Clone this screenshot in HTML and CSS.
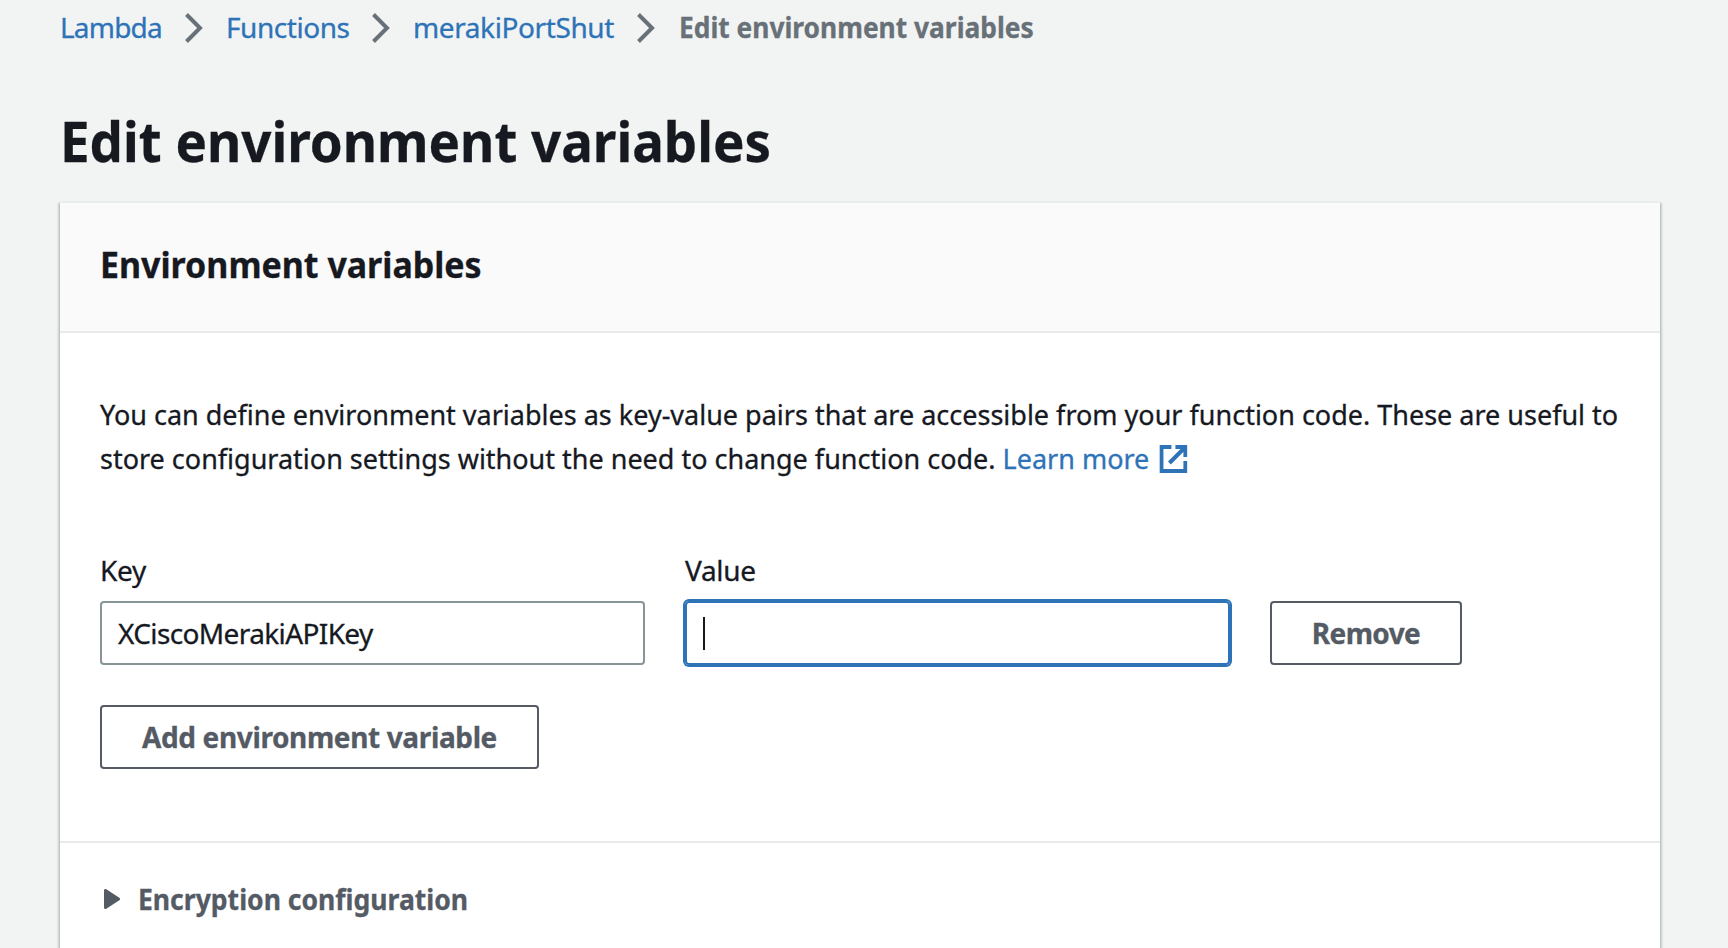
FILE: index.html
```html
<!DOCTYPE html>
<html lang="en">
<head>
<meta charset="utf-8">
<title>Edit environment variables</title>
<link rel="stylesheet" href="styles.css">
</head>
<body>
<nav class="breadcrumbs">
  <a class="crumb lambda">Lambda</a>
  <svg class="chevron" viewBox="0 0 18 30"><path d="M1.5 1.5 15 15 1.5 28.5"/></svg>
  <a class="crumb functions">Functions</a>
  <svg class="chevron" viewBox="0 0 18 30"><path d="M1.5 1.5 15 15 1.5 28.5"/></svg>
  <a class="crumb function-name">merakiPortShut</a>
  <svg class="chevron" viewBox="0 0 18 30"><path d="M1.5 1.5 15 15 1.5 28.5"/></svg>
  <span class="crumb current">Edit environment variables</span>
</nav>
<h1 class="title"><span>Edit environment variables</span></h1>
<main class="card">
  <header class="card-header"><h2>Environment variables</h2></header>
  <section class="card-body">
    <p class="intro">You can define environment variables as key-value pairs that are accessible from your function code. These are useful to<br>store configuration settings without the need to change function code. <a class="learn">Learn more</a><svg class="external" viewBox="0 0 28 28" preserveAspectRatio="none"><path d="M12 2H2v24h24V16M16 2h10v10M25 3 10 18"/></svg></p>
    <div class="variable-row">
      <div class="field">
        <label class="label">Key</label>
        <div class="input"><span>XCiscoMerakiAPIKey</span></div>
      </div>
      <div class="field">
        <label class="label">Value</label>
        <div class="input focused"><i class="caret"></i></div>
      </div>
      <button class="button remove">Remove</button>
    </div>
    <button class="button add">Add environment variable</button>
  </section>
  <section class="expander">
    <svg class="triangle" viewBox="0 0 16 20"><path d="M1.5 1.5v17L14.5 10z"/></svg>
    <span>Encryption configuration</span>
  </section>
</main>
</body>
</html>
```
FILE: styles.css
```css
* { box-sizing: border-box; }
body {
  margin: 0;
  height: 948px;
  overflow: hidden;
  background: #f2f4f3;
  color: #16191f;
  font: 28px/44px "Noto Sans", "Open Sans", sans-serif;
  -webkit-text-stroke: .3px currentColor;
}
h1, h2, p { margin: 0; }
.breadcrumbs { display: flex; align-items: center; height: 56px; padding-left: 60px; white-space: nowrap; }
.crumb { padding-bottom: 2px; color: #2e73b8; }
.lambda { width: 125px; letter-spacing: -.8px; }
.functions { width: 145px; letter-spacing: -.45px; }
.function-name { width: 223px; letter-spacing: -.4px; }
.crumb.current { color: #687078; font-weight: 700; transform: scaleX(.941); transform-origin: left; }
.chevron { flex: none; width: 18px; height: 30px; margin-right: 24px; fill: none; stroke: #687078; stroke-width: 4; }
.functions, .function-name { margin-left: -1px; margin-right: 1px; }
.title { height: 145px; padding: 48px 0 0 60px; font-size: 56px; line-height: 72px; white-space: nowrap; }
.title span { display: inline-block; transform: scaleX(.943); transform-origin: left; }
.card {
  width: 1600px;
  height: 760px;
  margin-left: 60px;
  border-top: 2px solid #eaeded;
  background: #fff;
  box-shadow: 0 2px 2px rgba(0,28,36,.3), 2px 2px 2px rgba(0,28,36,.15), -2px 2px 2px rgba(0,28,36,.15);
}
.card-header { height: 130px; padding: 40px 40px 0; border-bottom: 2px solid #eaeaea; background: #fafafa; }
.card-header h2 { font-size: 36px; line-height: 44px; transform: scaleX(.943); transform-origin: left; }
.card-body { height: 508px; padding: 59px 40px 0; }
.intro { height: 156px; white-space: nowrap; transform: scaleX(.964); transform-origin: left; }
.learn { color: #2e73b8; }
.external { width: 29px; height: 28px; margin-left: 10px; vertical-align: -4px; fill: none; stroke: #2e73b8; stroke-width: 4; }
.variable-row { display: flex; align-items: flex-end; gap: 40px; height: 117px; }
.field { width: 545px; }
.label { display: block; height: 53px; letter-spacing: -.3px; }
.input { display: flex; align-items: center; height: 64px; padding: 0 16px; border: 2px solid #879596; border-radius: 4px; letter-spacing: -.62px; }
.input.focused { border-color: #2e73b8; box-shadow: 0 0 0 2px #2e73b8; }
.caret { width: 2px; height: 33px; background: #16191f; }
.button { display: block; height: 64px; padding: 0; border: 2px solid #545b64; border-radius: 4px; background: #fff; color: #545b64; font: 700 28px/58px "Noto Sans", sans-serif; white-space: nowrap; }
.remove { width: 192px; letter-spacing: -.6px; }
.add { width: 439px; margin-top: 40px; letter-spacing: -.37px; }
.expander { display: flex; align-items: center; height: 118px; padding: 0 44px; border-top: 2px solid #eaeaea; color: #545b64; font-weight: 700; }
.expander span { padding-bottom: 4px; transform: scaleX(.948); transform-origin: left; }
.triangle { width: 16px; height: 20px; margin: 0 18px 4px 0; fill: #545b64; stroke: #545b64; stroke-width: 3; stroke-linejoin: round; }
```
